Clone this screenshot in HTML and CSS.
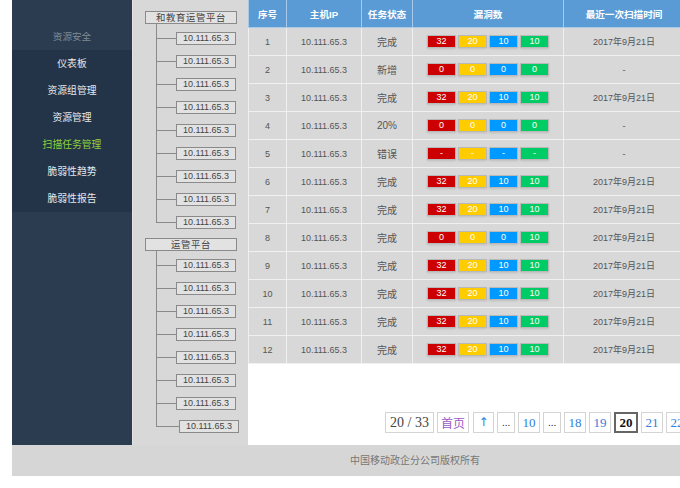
FILE: index.html
```html
<!DOCTYPE html>
<html lang="zh-CN">
<head>
<meta charset="utf-8">
<title>扫描任务管理</title>
<link rel="stylesheet" href="styles.css">
</head>
<body>
<div class="page">
  <div class="main">
    <aside class="sidebar">
      <div class="side-head">资源安全</div>
      <ul class="menu">
        <li>仪表板</li>
        <li>资源组管理</li>
        <li>资源管理</li>
        <li class="active">扫描任务管理</li>
        <li>脆弱性趋势</li>
        <li>脆弱性报告</li>
      </ul>
    </aside>
    <div class="tree-panel">
      <div class="group">
        <div class="root">和教育运管平台</div>
        <div class="children">
          <div class="leaf"><span class="conn"></span><span class="node">10.111.65.3</span></div>
          <div class="leaf"><span class="conn"></span><span class="node">10.111.65.3</span></div>
          <div class="leaf"><span class="conn"></span><span class="node">10.111.65.3</span></div>
          <div class="leaf"><span class="conn"></span><span class="node">10.111.65.3</span></div>
          <div class="leaf"><span class="conn"></span><span class="node">10.111.65.3</span></div>
          <div class="leaf"><span class="conn"></span><span class="node">10.111.65.3</span></div>
          <div class="leaf"><span class="conn"></span><span class="node">10.111.65.3</span></div>
          <div class="leaf"><span class="conn"></span><span class="node">10.111.65.3</span></div>
          <div class="leaf"><span class="conn"></span><span class="node">10.111.65.3</span></div>
        </div>
      </div>
      <div class="group group2">
        <div class="root">运管平台</div>
        <div class="children">
          <div class="leaf"><span class="conn"></span><span class="node">10.111.65.3</span></div>
          <div class="leaf"><span class="conn"></span><span class="node">10.111.65.3</span></div>
          <div class="leaf"><span class="conn"></span><span class="node">10.111.65.3</span></div>
          <div class="leaf"><span class="conn"></span><span class="node">10.111.65.3</span></div>
          <div class="leaf"><span class="conn"></span><span class="node">10.111.65.3</span></div>
          <div class="leaf"><span class="conn"></span><span class="node">10.111.65.3</span></div>
          <div class="leaf"><span class="conn"></span><span class="node">10.111.65.3</span></div>
          <div class="leaf shifted"><span class="conn"></span><span class="node">10.111.65.3</span></div>
        </div>
      </div>
    </div>
    <div class="content">
      <table class="grid">
        <colgroup>
          <col class="c1"><col class="c2"><col class="c3"><col class="c4"><col class="c5">
        </colgroup>
        <thead>
          <tr><th>序号</th><th>主机IP</th><th>任务状态</th><th>漏洞数</th><th>最近一次扫描时间</th></tr>
        </thead>
        <tbody>
          <tr><td>1</td><td>10.111.65.3</td><td class="st">完成</td><td><div class="badges"><span class="b red">32</span><span class="b yel">20</span><span class="b blu">10</span><span class="b grn">10</span></div></td><td>2017年9月21日</td></tr>
          <tr><td>2</td><td>10.111.65.3</td><td class="st">新增</td><td><div class="badges"><span class="b red">0</span><span class="b yel">0</span><span class="b blu">0</span><span class="b grn">0</span></div></td><td>-</td></tr>
          <tr><td>3</td><td>10.111.65.3</td><td class="st">完成</td><td><div class="badges"><span class="b red">32</span><span class="b yel">20</span><span class="b blu">10</span><span class="b grn">10</span></div></td><td>2017年9月21日</td></tr>
          <tr><td>4</td><td>10.111.65.3</td><td class="st">20%</td><td><div class="badges"><span class="b red">0</span><span class="b yel">0</span><span class="b blu">0</span><span class="b grn">0</span></div></td><td>-</td></tr>
          <tr><td>5</td><td>10.111.65.3</td><td class="st">错误</td><td><div class="badges"><span class="b red">-</span><span class="b yel">-</span><span class="b blu">-</span><span class="b grn">-</span></div></td><td>-</td></tr>
          <tr><td>6</td><td>10.111.65.3</td><td class="st">完成</td><td><div class="badges"><span class="b red">32</span><span class="b yel">20</span><span class="b blu">10</span><span class="b grn">10</span></div></td><td>2017年9月21日</td></tr>
          <tr><td>7</td><td>10.111.65.3</td><td class="st">完成</td><td><div class="badges"><span class="b red">32</span><span class="b yel">20</span><span class="b blu">10</span><span class="b grn">10</span></div></td><td>2017年9月21日</td></tr>
          <tr><td>8</td><td>10.111.65.3</td><td class="st">完成</td><td><div class="badges"><span class="b red">0</span><span class="b yel">0</span><span class="b blu">0</span><span class="b grn">10</span></div></td><td>2017年9月21日</td></tr>
          <tr><td>9</td><td>10.111.65.3</td><td class="st">完成</td><td><div class="badges"><span class="b red">32</span><span class="b yel">20</span><span class="b blu">10</span><span class="b grn">10</span></div></td><td>2017年9月21日</td></tr>
          <tr><td>10</td><td>10.111.65.3</td><td class="st">完成</td><td><div class="badges"><span class="b red">32</span><span class="b yel">20</span><span class="b blu">10</span><span class="b grn">10</span></div></td><td>2017年9月21日</td></tr>
          <tr><td>11</td><td>10.111.65.3</td><td class="st">完成</td><td><div class="badges"><span class="b red">32</span><span class="b yel">20</span><span class="b blu">10</span><span class="b grn">10</span></div></td><td>2017年9月21日</td></tr>
          <tr><td>12</td><td>10.111.65.3</td><td class="st">完成</td><td><div class="badges"><span class="b red">32</span><span class="b yel">20</span><span class="b blu">10</span><span class="b grn">10</span></div></td><td>2017年9月21日</td></tr>
        </tbody>
      </table>
      <div class="pager">
        <span class="pg info">20 / 33</span>
        <span class="pg first">首页</span>
        <span class="pg arrow">&#8593;</span>
        <span class="pg dots">...</span>
        <span class="pg">10</span>
        <span class="pg dots">...</span>
        <span class="pg">18</span>
        <span class="pg">19</span>
        <span class="pg cur">20</span>
        <span class="pg">21</span>
        <span class="pg">22</span>
      </div>
    </div>
  </div>
  <footer class="footer">中国移动政企分公司版权所有</footer>
</div>
</body>
</html>
```

FILE: styles.css
```css
html, body {
  margin: 0;
  padding: 0;
  background: #fff;
  overflow: hidden;
}
body {
  font-family: "Liberation Sans", "Noto Sans CJK SC", sans-serif;
  color: #555;
}
.page {
  margin-left: 12px;
  width: 806px;
}
.main {
  display: flex;
  height: 445px;
}

/* sidebar */
.sidebar {
  width: 120px;
  flex: none;
  background: #2b3c50;
}
.side-head {
  height: 50px;
  box-sizing: border-box;
  padding-top: 31px;
  text-align: center;
  font-size: 9.6px;
  line-height: 12px;
  color: #7f8b98;
}
.menu {
  list-style: none;
  margin: 0;
  padding: 0;
  background: #233448;
}
.menu li {
  height: 27px;
  line-height: 27px;
  text-align: center;
  font-size: 9.8px;
  color: #e6e9ec;
}
.menu li.active {
  color: #8fd23c;
}

/* tree */
.tree-panel {
  flex: none;
  background: #d8d8d8;
  border-left: 1px solid #e4e4e4;
  box-sizing: border-box;
  width: 116px;
  padding: 11px 0 0 12px;
}
.root {
  width: 92px;
  height: 13px;
  box-sizing: border-box;
  border: 1px solid #8a8a8a;
  background: #e2e2e2;
  font-size: 9.4px;
  line-height: 11px;
  letter-spacing: 0.6px;
  text-align: center;
  color: #444;
}
.children {
  position: relative;
  margin-left: 11px;
  padding-top: 3px;
}
.children::before {
  content: "";
  position: absolute;
  left: 0;
  top: 0;
  bottom: 11px;
  border-left: 1px solid #8a8a8a;
}
.leaf {
  height: 23px;
  display: flex;
  align-items: center;
}
.conn {
  width: 20px;
  height: 1px;
  background: #8a8a8a;
}
.leaf.shifted .conn {
  width: 23px;
}
.node {
  width: 60px;
  height: 13px;
  box-sizing: border-box;
  border: 1px solid #8a8a8a;
  background: #e2e2e2;
  font-size: 9px;
  line-height: 11px;
  text-align: center;
  color: #444;
}
.group2 {
  margin-top: 4px;
}

/* table */
.content {
  flex: 1;
  display: flex;
  flex-direction: column;
}
.grid {
  border-collapse: collapse;
  table-layout: fixed;
  width: 436px;
}
.c1 { width: 38px; }
.c2 { width: 75px; }
.c3 { width: 51px; }
.c4 { width: 151px; }
.c5 { width: 121px; }
.grid th {
  height: 27px;
  padding: 0;
  background: #5b9bd5;
  color: #fff;
  font-weight: bold;
  font-size: 9.6px;
  border: 1px solid #a9c9ea;
  border-top: none;
  text-align: center;
}
.grid td {
  height: 27px;
  padding: 0;
  background: #d8d8d8;
  border: 1px solid #f0f0f0;
  text-align: center;
  font-size: 9px;
  color: #555;
}
.grid td.st {
  font-size: 10px;
}
.badges {
  display: flex;
  justify-content: center;
  gap: 2px;
}
.b {
  width: 29px;
  height: 13px;
  box-sizing: border-box;
  border: 1px solid #b9b9b9;
  color: #fff;
  font-size: 9px;
  line-height: 11px;
  text-align: center;
  box-shadow: 0 1px 2px rgba(0,0,0,0.12);
}
.red { background: #cc0000; }
.yel { background: #ffcc00; }
.blu { background: #0099ff; }
.grn { background: #00cc66; }

/* pager */
.pager {
  margin-top: auto;
  margin-bottom: 12px;
  padding-left: 137px;
  display: flex;
  gap: 3px;
  white-space: nowrap;
}
.pg {
  flex: none;
  width: 22px;
  height: 21px;
  box-sizing: border-box;
  border: 1px solid #d4d4d4;
  padding: 0;
  font-family: "Liberation Serif", "DejaVu Serif", serif;
  font-size: 13px;
  line-height: 19px;
  color: #2f7ee0;
  text-align: center;
}
.pg.info {
  color: #444;
  font-size: 14px;
  width: 49px;
}
.pg.first {
  color: #9b59c4;
  font-family: "Noto Sans CJK SC", sans-serif;
  font-size: 12px;
  width: 32px;
  margin-right: 1px;
}
.pg.arrow {
  width: 21px;
  font-family: "DejaVu Sans", sans-serif;
  font-size: 12px;
}
.pg.dots {
  width: 18px;
  color: #333;
  font-size: 11px;
}
.pg.cur {
  border: 2px solid #666;
  color: #111;
  font-weight: bold;
  line-height: 17px;
  width: 24px;
}

/* footer */
.footer {
  height: 31px;
  line-height: 31px;
  background: #d6d6d6;
  text-align: center;
  font-size: 10px;
  color: #777;
}
```
